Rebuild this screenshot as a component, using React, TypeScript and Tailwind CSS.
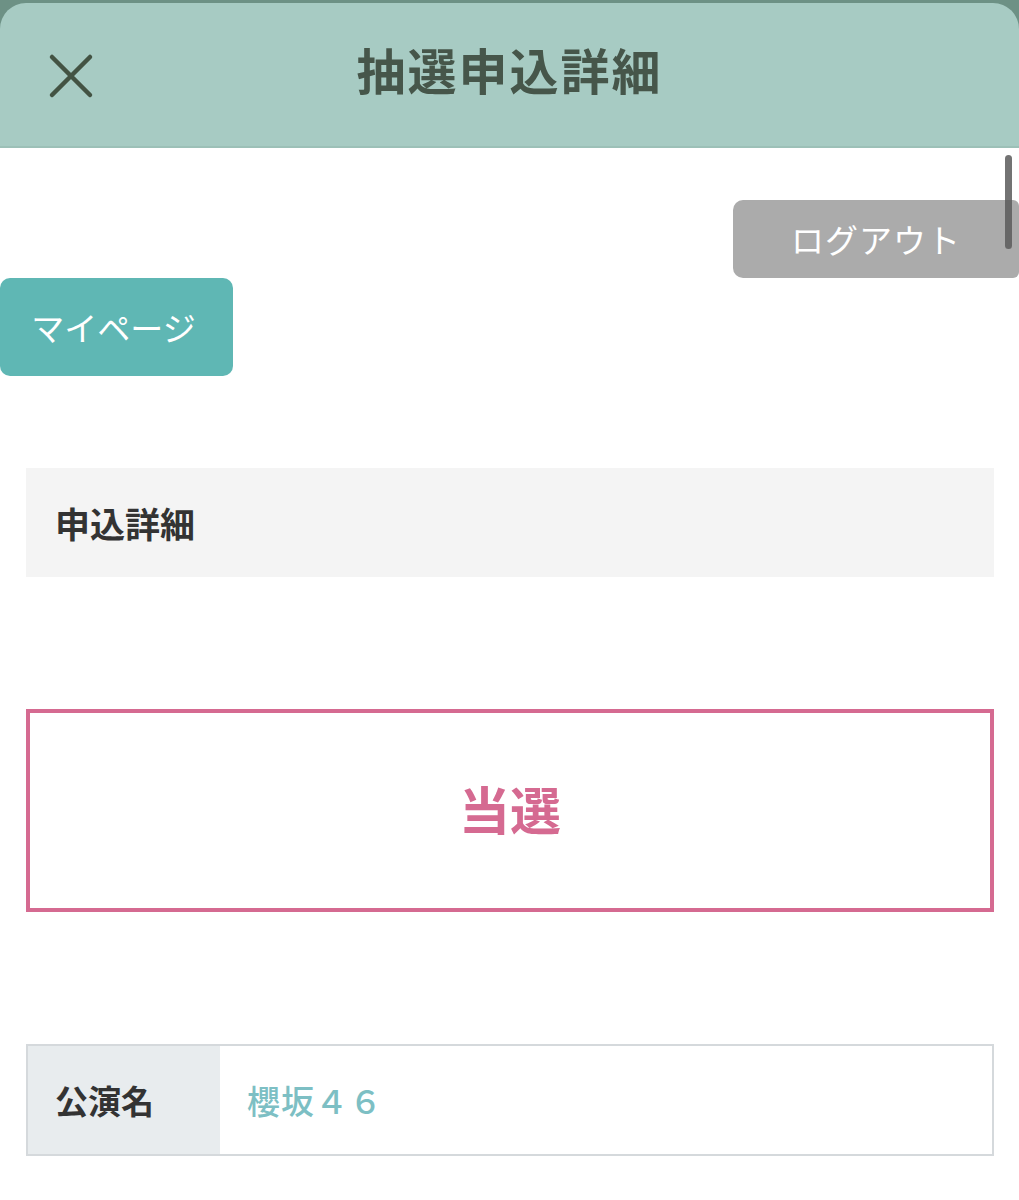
import React from 'react';

const jp = 'font-["Noto_Sans_CJK_JP","Noto_Sans",sans-serif]';

export default function App() {
  return (
    <div className={`relative w-[1019px] min-h-[1200px] bg-white ${jp}`}>
      {/* header */}
      <div className="bg-[#6d9185] pt-[3px]">
        <div className="relative flex h-[145px] items-center justify-center rounded-t-[26px] border-b-2 border-[#9cc0b7] bg-[#a7cbc3]">
          <svg
            className="absolute left-[48px] top-[50px]"
            width="46"
            height="46"
            viewBox="0 0 46 46"
            fill="none"
            stroke="#435343"
            strokeWidth="4.5"
            strokeLinecap="round"
          >
            <path d="M4 4L42 42M42 4L4 42" />
          </svg>
          <h1 className="-mt-[12px] text-[49px] font-bold leading-none tracking-[2px] text-[#46564a]">抽選申込詳細</h1>
        </div>
      </div>

      {/* scrollbar */}
      <div className="absolute left-[1005px] top-[155px] h-[94px] w-[7px] rounded-full bg-[#5a5a5a]/85" />

      {/* logout */}
      <div className="mt-[52px] flex justify-end">
        <button className="flex h-[78px] w-[286px] items-center justify-center rounded-l-[10px] rounded-r-[6px] bg-[#ababab] text-[33px] leading-none tracking-[1px] text-white">
          ログアウト
        </button>
      </div>

      {/* mypage */}
      <div className="flex">
        <button className="flex h-[98px] w-[233px] items-center justify-center rounded-[10px] bg-[#5fb7b4] pr-[6px] text-[33px] leading-none text-white">
          マイページ
        </button>
      </div>

      <div className="ml-[26px] mr-[25px]">
        {/* section heading */}
        <div className="mt-[92px] flex h-[109px] items-center bg-[#f4f4f4] px-[29px]">
          <h2 className="text-[35px] font-bold leading-none text-[#333333]">申込詳細</h2>
        </div>

        {/* result box */}
        <div className="mt-[132px] flex h-[203px] items-center justify-center border-4 border-[#d56a91]">
          <span className="-mt-[4px] text-[51px] font-bold leading-none text-[#d56a91]">当選</span>
        </div>

        {/* detail table */}
        <div className="mt-[132px] flex h-[112px] border-2 border-[#d5d9dc]">
          <div className="flex w-[192px] items-center bg-[#e8ecee] px-[27px]">
            <span className="text-[33px] font-bold leading-none text-[#333333]">公演名</span>
          </div>
          <div className="flex flex-1 items-center px-[27px]">
            <span className="text-[33px] font-medium leading-none tracking-[1px] text-[#7dbfc4]">櫻坂４６</span>
          </div>
        </div>
      </div>
    </div>
  );
}
